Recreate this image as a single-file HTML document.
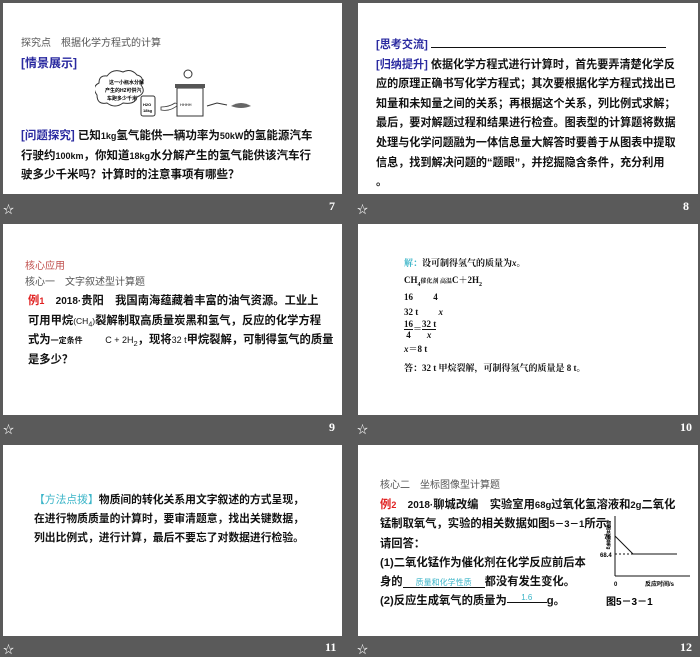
<!DOCTYPE html>
<html><head><meta charset="utf-8">
<style>
*{margin:0;padding:0;box-sizing:border-box}
body{width:700px;height:654px;background:#5a5a5a;position:relative;overflow:hidden;font-family:"Liberation Sans","Noto Sans CJK SC",sans-serif;}
sub{line-height:0}
.s{position:absolute;background:#fff;}
.t{position:absolute;white-space:nowrap;color:#111;font-weight:bold;}
.g{color:#555;font-weight:normal;font-size:10px}
.b{color:#2a2aa0}
.r{color:#e02020}
.c{color:#3bb5c8}
.ft{position:absolute;color:#fff;font-size:11px;}
.num{position:absolute;color:#fff;font-weight:bold;font-size:12px;font-family:"Liberation Serif",serif}
.u{display:inline-block;border-bottom:1px solid #111;line-height:1}
.sf{font-family:'Liberation Serif','Noto Serif CJK SC',serif;font-size:9px}
</style></head><body>

<div class="s" style="left:3px;top:3px;width:339px;height:191px"></div>
<div class="s" style="left:358px;top:3px;width:340px;height:191px"></div>
<div class="s" style="left:3px;top:224px;width:339px;height:191px"></div>
<div class="s" style="left:358px;top:224px;width:340px;height:191px"></div>
<div class="s" style="left:3px;top:445px;width:339px;height:191px"></div>
<div class="s" style="left:358px;top:445px;width:340px;height:191px"></div>

<!-- slide 7 -->
<div class="t g" style="left:21px;top:34px">探究点　根据化学方程式的计算</div>
<div class="t b" style="left:21px;top:54px;font-size:12px">[情景展示]</div>
<svg style="position:absolute;left:95px;top:66px" width="160" height="54" viewBox="0 0 160 54">
<path d="M12 10 q6-8 16-4 q8-4 14 3 q8 2 4 10 q6 8-4 12 q-2 8-14 6 q-8 6-16 0 q-10 2-10-8 q-6-8 2-12 q0-8 8-7z" fill="#fff" stroke="#333" stroke-width="1"/>
<text x="14" y="18" font-size="5" font-weight="bold">这一小瓶水分解</text>
<text x="10" y="26" font-size="5" font-weight="bold">产生的H2可供汽</text>
<text x="12" y="34" font-size="5" font-weight="bold">车跑多少千米</text>
<rect x="46" y="30" width="14" height="20" rx="2" fill="#fff" stroke="#333"/>
<text x="48" y="40" font-size="4" font-weight="bold">H2O</text><text x="48" y="46" font-size="4" font-weight="bold">18kg</text>
<path d="M66 44 q10 2 18-6 l-4 -1 q-6 4 -14 4z" fill="#fff" stroke="#333" stroke-width="0.8"/>
<circle cx="93" cy="8" r="4" fill="none" stroke="#333"/>
<rect x="82" y="22" width="26" height="28" fill="#fff" stroke="#333"/>
<rect x="80" y="18" width="30" height="4" fill="#555"/>
<text x="85" y="40" font-size="4">HHHH</text>
<path d="M112 40 l10-3 l10 2" stroke="#333" fill="none"/>
<path d="M136 40 q10-6 20 0 q-10 4 -20 0z" fill="#666"/>
</svg>
<div class="t" style="left:21px;top:127px;font-size:11.5px;line-height:19.5px"><span class="b">[问题探究]</span> 已知<span style="font-size:9px">1kg</span>氢气能供一辆功率为<span style="font-size:9px">50kW</span>的氢能源汽车<br>行驶约<span style="font-size:9px">100km</span>，你知道<span style="font-size:9px">18kg</span>水分解产生的氢气能供该汽车行<br>驶多少千米吗？计算时的注意事项有哪些？</div>
<div class="ft" style="left:3px;top:201px">☆</div><div class="num" style="left:329px;top:199px">7</div>

<!-- slide 8 -->
<div class="t" style="left:376px;top:36px;font-size:11.1px;line-height:19.6px"><span class="b">[思考交流]</span> <span class="u" style="width:235px"></span><br><span class="b">[归纳提升]</span> 依据化学方程式进行计算时，首先要弄清楚化学反<br>应的原理正确书写化学方程式；其次要根据化学方程式找出已<br>知量和未知量之间的关系；再根据这个关系，列比例式求解；<br>最后，要对解题过程和结果进行检查。图表型的计算题将数据<br>处理与化学问题融为一体信息量大解答时要善于从图表中提取<br>信息，找到解决问题的“题眼”，并挖掘隐含条件，充分利用<br>。</div>
<div class="ft" style="left:357px;top:201px">☆</div><div class="num" style="left:683px;top:199px">8</div>

<!-- slide 9 -->
<div class="t" style="left:25px;top:257px;font-size:10px;color:#c0504d;font-weight:normal">核心应用</div>
<div class="t g" style="left:25px;top:273px">核心一　文字叙述型计算题</div>
<div class="t" style="left:28px;top:292px;font-size:11.3px;line-height:19.5px"><span class="r">例<span style="font-size:9px">1</span></span>　<span style="font-size:10px">2018·</span>贵阳　我国南海蕴藏着丰富的油气资源。工业上<br>可用甲烷<span style="font-size:8.5px;font-weight:normal">(CH<sub>4</sub>)</span>裂解制取高质量炭黑和氢气，反应的化学方程<br>式为<span style="font-size:8px">一定条件</span>　　<span style="font-size:9px;font-weight:normal">C + 2H<sub>2</sub></span>，现将<span style="font-size:9px;font-weight:normal">32 t</span>甲烷裂解，可制得氢气的质量<br>是多少？</div>
<div class="ft" style="left:3px;top:421px">☆</div><div class="num" style="left:329px;top:420px">9</div>

<!-- slide 10 -->
<div class="t sf" style="left:404px;top:256px"><span class="c">解：</span>设可制得氢气的质量为<i>x</i>。</div>
<div class="t sf" style="left:404px;top:273px">CH<sub style="font-size:6px">4</sub><span style="font-size:6px">催化剂 高温</span>C＋2H<sub style="font-size:6px">2</sub></div>
<div class="t sf" style="left:404px;top:290px">16　　 4</div>
<div class="t sf" style="left:404px;top:305px">32 t　　 <i>x</i></div>
<div class="t sf" style="left:404px;top:319px;line-height:10px"><span style="display:inline-block;text-align:center;vertical-align:middle"><span style="border-bottom:1px solid #111;display:block">16</span>4</span>＝<span style="display:inline-block;text-align:center;vertical-align:middle"><span style="border-bottom:1px solid #111;display:block">32 t</span><i>x</i></span></div>
<div class="t sf" style="left:404px;top:342px"><i>x</i>＝8 t</div>
<div class="t sf" style="left:404px;top:361px">答：32 t 甲烷裂解，可制得氢气的质量是 8 t。</div>
<div class="ft" style="left:357px;top:421px">☆</div><div class="num" style="left:680px;top:420px">10</div>

<!-- slide 11 -->
<div class="t" style="left:34px;top:491px;font-size:10.8px;line-height:19px"><span class="c" style="font-weight:normal">【方法点拨】</span>物质间的转化关系用文字叙述的方式呈现，<br>在进行物质质量的计算时，要审清题意，找出关键数据，<br>列出比例式，进行计算，最后不要忘了对数据进行检验。</div>
<div class="ft" style="left:3px;top:641px">☆</div><div class="num" style="left:325px;top:640px">11</div>

<!-- slide 12 -->
<div class="t g" style="left:380px;top:476px">核心二　坐标图像型计算题</div>
<div class="t" style="left:380px;top:496px;font-size:11.3px;line-height:19.3px"><span class="r">例<span style="font-size:9px">2</span></span>　<span style="font-size:10px">2018·</span>聊城改编　实验室用<span style="font-size:9.5px">68g</span>过氧化氢溶液和<span style="font-size:9.5px">2g</span>二氧化<br>锰制取氧气，实验的相关数据如图<span style="font-size:9.5px">5－3－1</span>所示。<br>请回答：<br>(1)二氧化锰作为催化剂在化学反应前后本<br>身的<span class="u" style="width:82px;text-align:center;font-size:8px;font-weight:normal;color:#3bb5c8">质量和化学性质</span>都没有发生变化。<br>(2)反应生成氧气的质量为<span class="u" style="width:40px;text-align:center;font-size:8px;font-weight:normal;color:#3bb5c8;vertical-align:4px">1.6</span>g。</div>
<svg style="position:absolute;left:595px;top:512px" width="100" height="100" viewBox="0 0 100 100">
<line x1="20" y1="4" x2="20" y2="64" stroke="#111"/><line x1="20" y1="64" x2="95" y2="64" stroke="#111"/>
<line x1="20" y1="24" x2="38" y2="42" stroke="#111"/><line x1="38" y1="42" x2="82" y2="42" stroke="#111"/>
<line x1="20" y1="42" x2="38" y2="42" stroke="#111" stroke-dasharray="2,2"/>
<text x="9" y="27" font-size="6" font-weight="bold">70</text>
<text x="5" y="45" font-size="6" font-weight="bold">68.4</text>
<text x="19" y="74" font-size="6" font-weight="bold">0</text>
<text x="50" y="74" font-size="6" font-weight="bold">反应时间/s</text>
<text x="13" y="8" font-size="5" font-weight="bold" writing-mode="tb">物质总质量/g</text>
<text x="11" y="93" font-size="10" font-weight="bold">图5－3－1</text>
</svg>
<div class="ft" style="left:357px;top:641px">☆</div><div class="num" style="left:680px;top:640px">12</div>
</body></html>
